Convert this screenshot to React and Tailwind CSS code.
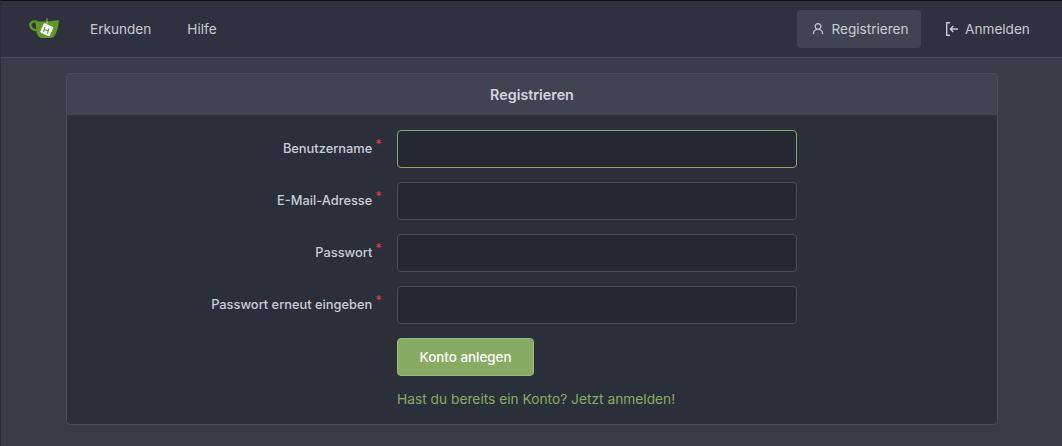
import React from 'react'

const fields = [
  { label: 'Benutzername', focused: true },
  { label: 'E-Mail-Adresse' },
  { label: 'Passwort' },
  { label: 'Passwort erneut eingeben' },
]

const GiteaLogo = () => (
  <svg width="32" height="24" viewBox="0 0 32 24" fill="none">
    <path d="M9 4.600C4.200 3.600 2 5.800 2.400 8.600c.5 3 3.800 4.600 8 4.800" stroke="#609926" strokeWidth="2.400" fill="none" />
    <path d="M7.500 4.400c7 .5 15.500.2 23.300-1.400.2 3.500-1.200 10-3.200 14-1.200 2.600-2.800 4-5.300 4h-8.300c-2.500 0-4-1.500-5-4.200-.8-3.500-1.300-8.400-1.500-12.400z" fill="#609926" />
    <path d="M19 1.500v6" stroke="#d9e4c8" strokeWidth="0.700" />
    <rect x="13.500" y="7.500" width="10.500" height="10.500" rx="1.500" transform="rotate(24 18.750 12.750)" fill="#fff" />
    <path d="M17 9.800l-1.500 5.400M21 11.300l-1.500 5.400M16.300 12.600l4.300 1.600" stroke="#609926" strokeWidth="1.100" />
  </svg>
)

const UserIcon = () => (
  <svg width="14" height="14" viewBox="0 0 16 16" fill="currentColor">
    <path d="M10.561 8.073a6.005 6.005 0 0 1 3.432 5.142.75.75 0 1 1-1.498.07 4.5 4.5 0 0 0-8.99 0 .75.75 0 0 1-1.498-.07 6.004 6.004 0 0 1 3.431-5.142 3.999 3.999 0 1 1 5.123 0ZM10.500 5a2.500 2.500 0 1 0-5 0 2.500 2.500 0 0 0 5 0Z" />
  </svg>
)

const SignInIcon = () => (
  <svg width="14" height="16" viewBox="0 0 14 16" fill="none" stroke="currentColor" strokeWidth="1.400">
    <path d="M5 1.700H1.700v12.600H5" />
    <path d="M13 8H5.500M8.300 5 5.300 8l3 3" />
  </svg>
)

export default function App() {
  return (
    <div className="h-[446px] overflow-hidden border-l border-t border-l-[#2a2d36] border-t-[#0d0e11] bg-[#383c47] font-['Inter','Liberation_Sans',sans-serif] text-[13.6px] text-[#d2d5dc]">
      <nav className="flex h-[57px] items-center justify-between border-b border-[#4a4e59] bg-[#2e323e] pl-[27px] pr-[18px]">
        <div className="flex items-center">
          <GiteaLogo />
          <a className="ml-[30px] text-[#c9ccd4]">Erkunden</a>
          <a className="ml-[36px] text-[#c9ccd4]">Hilfe</a>
        </div>
        <div className="flex items-center gap-[10px]">
          <a className="flex h-[38px] w-[124px] items-center justify-center gap-[6px] rounded-[4px] bg-[#404450] pl-[2px] text-[#c9ccd4]">
            <UserIcon />
            Registrieren
          </a>
          <a className="flex h-[38px] w-[113px] items-center justify-center gap-[6px] text-[#c9ccd4]">
            <SignInIcon />
            Anmelden
          </a>
        </div>
      </nav>

      <main className="pl-[65px] pr-[64px] pt-[15px]">
        <div className="overflow-hidden rounded-[4px] border border-[#4a4e59] bg-[#2b2f3a]">
          <h2 className="flex h-[42px] items-center justify-center border-b border-[#2b2f3a] bg-[#404450] text-[14.3px] font-semibold text-[#d2d5dc]">
            Registrieren
          </h2>
          <form className="flex h-[308px] flex-col gap-[14px] pt-[14px]">
            {fields.map((field) => (
              <div key={field.label} className="flex items-center">
                <label className="w-[330px] pr-[15px] text-right text-[12.85px] font-medium text-[#c9ccd4]">
                  {field.label}
                  <span className="relative -top-[4px] ml-[3px] text-[#db4040]">*</span>
                </label>
                <input
                  type="text"
                  className={`h-[38px] w-[400px] rounded-[4px] border bg-[#232832] ${field.focused ? 'border-[#87ab63]' : 'border-[#4a4e59]'}`}
                />
              </div>
            ))}
            <div className="pl-[330px]">
              <button type="button" className="h-[38px] w-[137px] rounded-[4px] border border-[#9dbb7e] bg-[#87ab63] text-[13.4px] font-medium text-white">
                Konto anlegen
              </button>
              <a className="mt-[13px] block text-[13.75px] text-[#87ab63]">Hast du bereits ein Konto? Jetzt anmelden!</a>
            </div>
          </form>
        </div>
      </main>
    </div>
  )
}
